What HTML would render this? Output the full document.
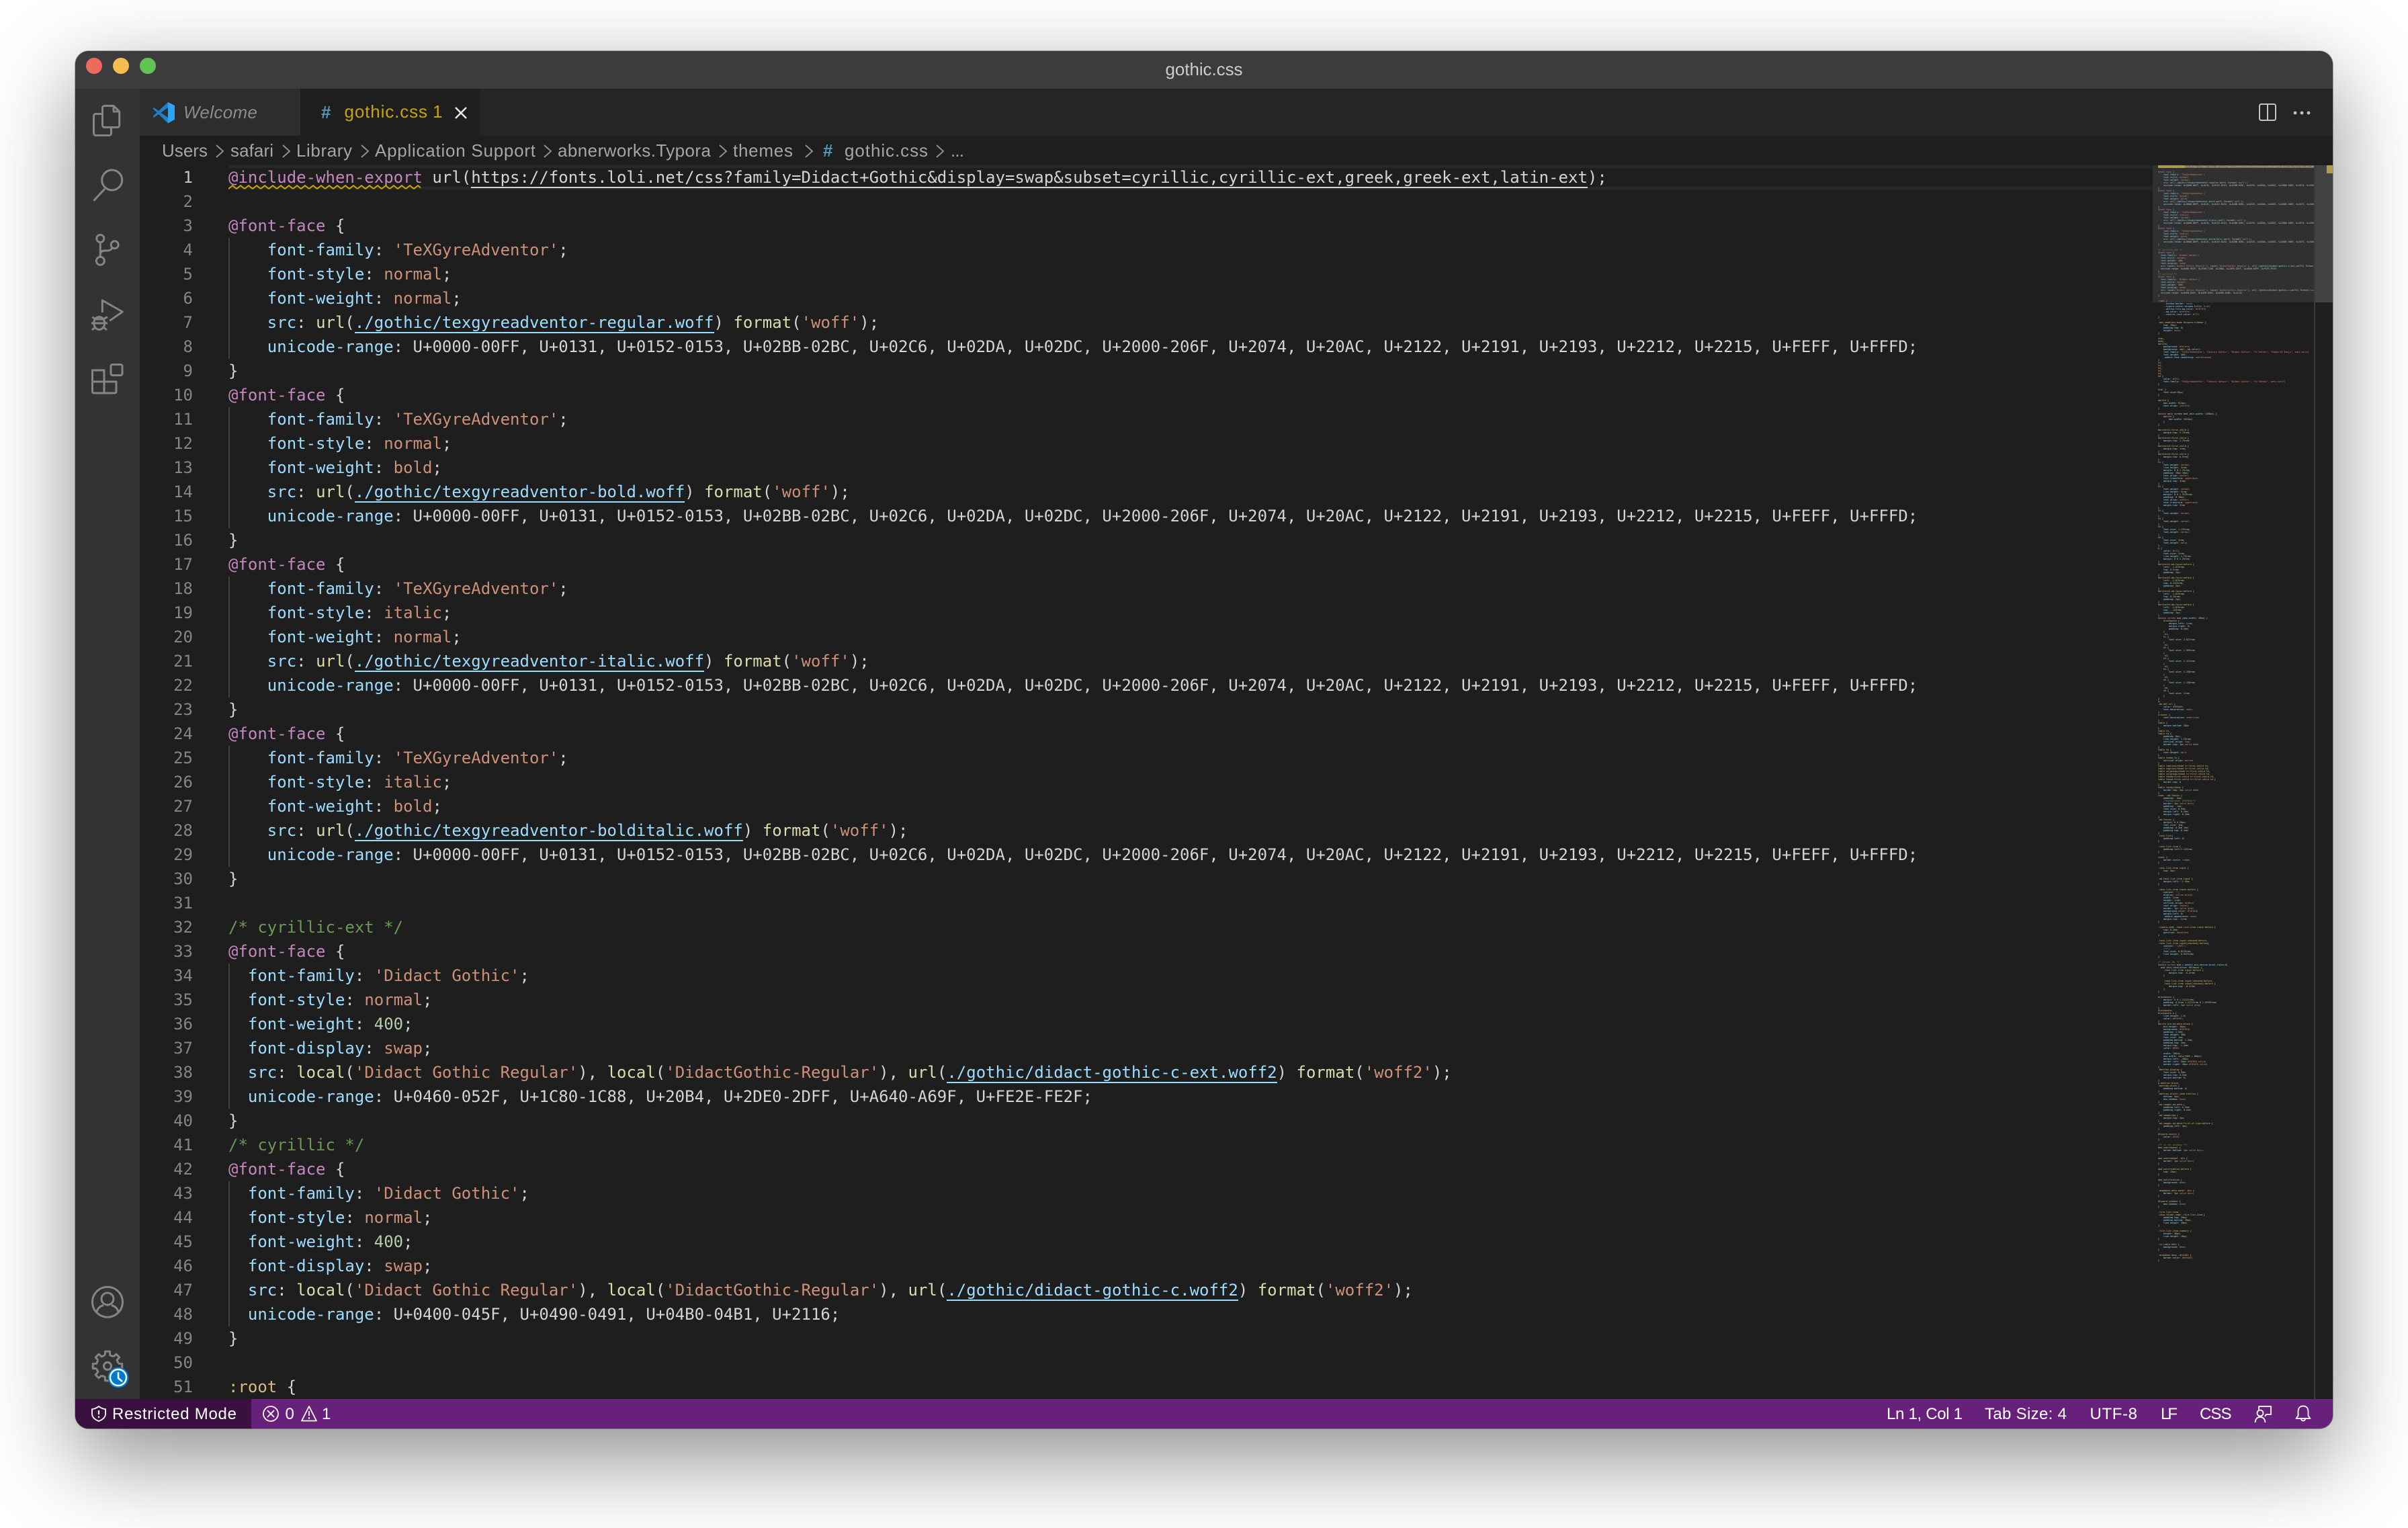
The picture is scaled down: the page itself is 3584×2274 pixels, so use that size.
<!DOCTYPE html>
<html lang="en"><head><meta charset="utf-8"><title>gothic.css</title>
<style>
html,body{margin:0;padding:0;background:#fff}
body{position:relative;width:3584px;height:2274px;overflow:hidden}
#win{position:absolute;left:112px;top:76px;width:3360px;height:2050px;border-radius:20px;box-shadow:0 0 0 1px rgba(0,0,0,.28),0 44px 130px 6px rgba(0,0,0,.42)}
#clip{position:absolute;left:0;top:0;width:3360px;height:2050px;border-radius:20px;overflow:hidden;background:#1e1e1e}
#in{position:absolute;left:-112px;top:-76px;width:3584px;height:2274px}
.r{position:absolute}
pre{margin:0;font-family:"DejaVu Sans Mono","Liberation Mono",monospace;color:#d4d4d4;font-variant-ligatures:none;white-space:pre}
#code{left:340px;top:246px;width:2864px;height:1836px;overflow:hidden;font-size:24px;line-height:36px}
#nums{left:208px;top:246px;width:79px;height:1836px;overflow:hidden;font-size:24px;line-height:36px;text-align:right;color:#858585}
#nums span{color:#c6c6c6}
#mini{left:3212px;top:246px;width:232px;height:1836px;overflow:hidden;font-size:3.322px;line-height:4px}
u{color:#9cdcfe;text-decoration:none}
s{color:#ce9178;text-decoration:none}
i{color:#d7ba7d;font-style:normal}
b{color:#b5cea8;font-weight:normal}
em{color:#c586c0;font-style:normal}
q{color:#dcdcaa;quotes:none}
q:before,q:after{content:none}
small{color:#6a9955;font-size:inherit}
a{border-bottom:2px solid currentColor}
a.l{color:#9cdcfe}
#mini a{border:0}
svg text{font-family:"Liberation Sans",Arial,sans-serif}
</style></head><body>
<div id="win"><div id="clip"><div id="in">
<div class="r" style="left:112px;top:76px;width:3360px;height:56px;background:#3c3c3c"></div>
<div class="r" style="left:112px;top:132px;width:96px;height:1950px;background:#333"></div>
<div class="r" style="left:208px;top:132px;width:3264px;height:70px;background:#252526"></div>
<div class="r" style="left:208px;top:132px;width:239px;height:70px;background:#2d2d2d"></div>
<div class="r" style="left:447px;top:132px;width:267px;height:70px;background:#1e1e1e"></div>
<div class="r" style="left:340px;top:246px;width:2864px;height:36px;box-sizing:border-box;border-top:4px solid #282828;border-bottom:4px solid #282828"></div>
<div class="r" style="left:340px;top:354px;width:2px;height:180px;background:#404040"></div>
<div class="r" style="left:340px;top:606px;width:2px;height:180px;background:#404040"></div>
<div class="r" style="left:340px;top:858px;width:2px;height:180px;background:#404040"></div>
<div class="r" style="left:340px;top:1110px;width:2px;height:180px;background:#404040"></div>
<div class="r" style="left:340px;top:1434px;width:2px;height:216px;background:#404040"></div>
<div class="r" style="left:340px;top:1758px;width:2px;height:216px;background:#404040"></div>
<pre id="nums" class="r"><span>1</span>
2
3
4
5
6
7
8
9
10
11
12
13
14
15
16
17
18
19
20
21
22
23
24
25
26
27
28
29
30
31
32
33
34
35
36
37
38
39
40
41
42
43
44
45
46
47
48
49
50
51</pre>
<pre id="code" class="r"><em>@include-when-export</em> url(<a>https://fonts.loli.net/css?family=Didact+Gothic&amp;display=swap&amp;subset=cyrillic,cyrillic-ext,greek,greek-ext,latin-ext</a>);

<em>@font-face</em> {
    <u>font-family</u>: <s>'TeXGyreAdventor'</s>;
    <u>font-style</u>: <s>normal</s>;
    <u>font-weight</u>: <s>normal</s>;
    <u>src</u>: <q>url</q>(<a class="l">./gothic/texgyreadventor-regular.woff</a>) <q>format</q>(<s>'woff'</s>);
    <u>unicode-range</u>: U+0000-00FF, U+0131, U+0152-0153, U+02BB-02BC, U+02C6, U+02DA, U+02DC, U+2000-206F, U+2074, U+20AC, U+2122, U+2191, U+2193, U+2212, U+2215, U+FEFF, U+FFFD;
}
<em>@font-face</em> {
    <u>font-family</u>: <s>'TeXGyreAdventor'</s>;
    <u>font-style</u>: <s>normal</s>;
    <u>font-weight</u>: <s>bold</s>;
    <u>src</u>: <q>url</q>(<a class="l">./gothic/texgyreadventor-bold.woff</a>) <q>format</q>(<s>'woff'</s>);
    <u>unicode-range</u>: U+0000-00FF, U+0131, U+0152-0153, U+02BB-02BC, U+02C6, U+02DA, U+02DC, U+2000-206F, U+2074, U+20AC, U+2122, U+2191, U+2193, U+2212, U+2215, U+FEFF, U+FFFD;
}
<em>@font-face</em> {
    <u>font-family</u>: <s>'TeXGyreAdventor'</s>;
    <u>font-style</u>: <s>italic</s>;
    <u>font-weight</u>: <s>normal</s>;
    <u>src</u>: <q>url</q>(<a class="l">./gothic/texgyreadventor-italic.woff</a>) <q>format</q>(<s>'woff'</s>);
    <u>unicode-range</u>: U+0000-00FF, U+0131, U+0152-0153, U+02BB-02BC, U+02C6, U+02DA, U+02DC, U+2000-206F, U+2074, U+20AC, U+2122, U+2191, U+2193, U+2212, U+2215, U+FEFF, U+FFFD;
}
<em>@font-face</em> {
    <u>font-family</u>: <s>'TeXGyreAdventor'</s>;
    <u>font-style</u>: <s>italic</s>;
    <u>font-weight</u>: <s>bold</s>;
    <u>src</u>: <q>url</q>(<a class="l">./gothic/texgyreadventor-bolditalic.woff</a>) <q>format</q>(<s>'woff'</s>);
    <u>unicode-range</u>: U+0000-00FF, U+0131, U+0152-0153, U+02BB-02BC, U+02C6, U+02DA, U+02DC, U+2000-206F, U+2074, U+20AC, U+2122, U+2191, U+2193, U+2212, U+2215, U+FEFF, U+FFFD;
}

<small>/* cyrillic-ext */</small>
<em>@font-face</em> {
  <u>font-family</u>: <s>'Didact Gothic'</s>;
  <u>font-style</u>: <s>normal</s>;
  <u>font-weight</u>: <b>400</b>;
  <u>font-display</u>: <s>swap</s>;
  <u>src</u>: <q>local</q>(<s>'Didact Gothic Regular'</s>), <q>local</q>(<s>'DidactGothic-Regular'</s>), <q>url</q>(<a class="l">./gothic/didact-gothic-c-ext.woff2</a>) <q>format</q>(<s>'woff2'</s>);
  <u>unicode-range</u>: U+0460-052F, U+1C80-1C88, U+20B4, U+2DE0-2DFF, U+A640-A69F, U+FE2E-FE2F;
}
<small>/* cyrillic */</small>
<em>@font-face</em> {
  <u>font-family</u>: <s>'Didact Gothic'</s>;
  <u>font-style</u>: <s>normal</s>;
  <u>font-weight</u>: <b>400</b>;
  <u>font-display</u>: <s>swap</s>;
  <u>src</u>: <q>local</q>(<s>'Didact Gothic Regular'</s>), <q>local</q>(<s>'DidactGothic-Regular'</s>), <q>url</q>(<a class="l">./gothic/didact-gothic-c.woff2</a>) <q>format</q>(<s>'woff2'</s>);
  <u>unicode-range</u>: U+0400-045F, U+0490-0491, U+04B0-04B1, U+2116;
}

<i>:root</i> {</pre>
<div class="r" style="left:3212px;top:246px;width:232px;height:4px;background:#6f6540"></div>
<div class="r" style="left:3212px;top:246px;width:40px;height:4px;background:#b8a14a"></div>
<pre id="mini" class="r"><em></em>                    url(<a>https://fonts.loli.net/css?family=Didact+Gothic&amp;display=swap&amp;subset=cyrillic,cyrillic-ext,greek,greek-ext,latin-ext</a>);

<em>@font-face</em> {
    <u>font-family</u>: <s>'TeXGyreAdventor'</s>;
    <u>font-style</u>: <s>normal</s>;
    <u>font-weight</u>: <s>normal</s>;
    <u>src</u>: <q>url</q>(<a class="l"><u>./gothic/texgyreadventor-regular.woff</u></a>) <q>format</q>(<s>'woff'</s>);
    <u>unicode-range</u>: U+0000-00FF, U+0131, U+0152-0153, U+02BB-02BC, U+02C6, U+02DA, U+02DC, U+2000-206F, U+2074, U+20AC, U+2122, U+2191, U+2193, U+2212, U+2215, U+FEFF, U+FFFD;
}
<em>@font-face</em> {
    <u>font-family</u>: <s>'TeXGyreAdventor'</s>;
    <u>font-style</u>: <s>normal</s>;
    <u>font-weight</u>: <s>bold</s>;
    <u>src</u>: <q>url</q>(<u>./gothic/texgyreadventor-bold.woff</u>) <q>format</q>(<s>'woff'</s>);
    <u>unicode-range</u>: U+0000-00FF, U+0131, U+0152-0153, U+02BB-02BC, U+02C6, U+02DA, U+02DC, U+2000-206F, U+2074, U+20AC, U+2122, U+2191, U+2193, U+2212, U+2215, U+FEFF, U+FFFD;
}
<em>@font-face</em> {
    <u>font-family</u>: <s>'TeXGyreAdventor'</s>;
    <u>font-style</u>: <s>italic</s>;
    <u>font-weight</u>: <s>normal</s>;
    <u>src</u>: <q>url</q>(<u>./gothic/texgyreadventor-italic.woff</u>) <q>format</q>(<s>'woff'</s>);
    <u>unicode-range</u>: U+0000-00FF, U+0131, U+0152-0153, U+02BB-02BC, U+02C6, U+02DA, U+02DC, U+2000-206F, U+2074, U+20AC, U+2122, U+2191, U+2193, U+2212, U+2215, U+FEFF, U+FFFD;
}
<em>@font-face</em> {
    <u>font-family</u>: <s>'TeXGyreAdventor'</s>;
    <u>font-style</u>: <s>italic</s>;
    <u>font-weight</u>: <s>bold</s>;
    <u>src</u>: <q>url</q>(<u>./gothic/texgyreadventor-bolditalic.woff</u>) <q>format</q>(<s>'woff'</s>);
    <u>unicode-range</u>: U+0000-00FF, U+0131, U+0152-0153, U+02BB-02BC, U+02C6, U+02DA, U+02DC, U+2000-206F, U+2074, U+20AC, U+2122, U+2191, U+2193, U+2212, U+2215, U+FEFF, U+FFFD;
}

<small>/* cyrillic-ext */</small>
<em>@font-face</em> {
  <u>font-family</u>: <s>'Didact Gothic'</s>;
  <u>font-style</u>: <s>normal</s>;
  <u>font-weight</u>: <b>400</b>;
  <u>font-display</u>: <s>swap</s>;
  <u>src</u>: <q>local</q>(<s>'Didact Gothic Regular'</s>), <q>local</q>(<s>'DidactGothic-Regular'</s>), <q>url</q>(<u>./gothic/didact-gothic-c-ext.woff2</u>) <q>format</q>(<s>'woff2'</s>);
  <u>unicode-range</u>: U+0460-052F, U+1C80-1C88, U+20B4, U+2DE0-2DFF, U+A640-A69F, U+FE2E-FE2F;
}
<small>/* cyrillic */</small>
<em>@font-face</em> {
  <u>font-family</u>: <s>'Didact Gothic'</s>;
  <u>font-style</u>: <s>normal</s>;
  <u>font-weight</u>: <b>400</b>;
  <u>font-display</u>: <s>swap</s>;
  <u>src</u>: <q>local</q>(<s>'Didact Gothic Regular'</s>), <q>local</q>(<s>'DidactGothic-Regular'</s>), <q>url</q>(<u>./gothic/didact-gothic-c.woff2</u>) <q>format</q>(<s>'woff2'</s>);
  <u>unicode-range</u>: U+0400-045F, U+0490-0491, U+04B0-04B1, U+2116;
}

<i>:root</i> {
    <u>--window-border</u>: <s>none</s>;
    <u>--typora-center-window-title</u>: <s>true</s>;
    <u>--active-file-bg-color</u>: <s>#f5f5f5</s>;
    <u>--bg-color</u>: <s>#fefefe</s>;
    <u>--control-text-color</u>: <s>#777</s>;
}

<i>.mac-seamless-mode #typora-sidebar</i> {
    <u>top</u>: <b>20px</b>;
    <u>padding-top</u>: <b>0</b>;
    <u>height</u>: <s>auto</s>;
}

<i>html</i>,
<i>body</i>,
<i>#write</i>{
    <u>background</u>: <s>#fefefe</s>;
    <u>background</u>: <q>var</q>(<u>--bg-color</u>);
    <u>font-family</u>: <s>"TeXGyreAdventor", "Century Gothic", "Didact Gothic", "Yu Gothic", "Segoe UI Emoji", sans-serif</s>;
    <u>font-weight</u>: <b>300</b>;
    <u>-webkit-font-smoothing</u>: <s>antialiased</s>;
}
<i>h1</i>,
<i>h2</i>,
<i>h3</i>,
<i>h4</i>,
<i>h5</i>,
<i>h6</i> {
    <u>color</u>: <s>#222</s>;
    <u>font-family</u>: <s>"TeXGyreAdventor", "Century Gothic", "Didact Gothic", "Yu Gothic", sans-serif</s>;
}

<i>html</i> {
    <u>font-size</u>:<b>19px</b>;
}

<i>#write</i> {
    <u>max-width</u>: <b>914px</b>;
    <u>text-align</u>: <s>justify</s>;
}

<em>@media</em> only screen and (<u>min-width</u>: <b>1400px</b>) {
    <i>#write</i> {
        <u>max-width</u>: <b>1024px</b>;
    }
}

<i>#write&gt;h1:first-child</i> {
    <u>margin-top</u>: <b>2.75rem</b>;
}
<i>#write&gt;h2:first-child</i> {
    <u>margin-top</u>: <b>1.75rem</b>;
}
<i>#write&gt;h3:first-child</i> {
    <u>margin-top</u>: <b>1rem</b>;
}
<i>#write&gt;h4:first-child</i> {
    <u>margin-top</u>: <b>0.5rem</b>;
}
<i>h1</i> {
    <u>font-weight</u>: <s>normal</s>;
    <u>line-height</u>: <b>4rem</b>;
    <u>margin</u>: <b>0 0 1.75rem</b>;
    <u>padding</u>: <b>20px 30px</b>;
    <u>text-align</u>: <s>center</s>;
    <u>text-transform</u>: <s>uppercase</s>;
    <u>margin-top</u>: <b>4rem</b>;
}
<i>h2</i> {
    <u>font-weight</u>: <s>normal</s>;
    <u>line-height</u>: <b>3rem</b>;
    <u>margin</u>: <b>0 0 1.3125rem</b>;
    <u>padding</u>: <b>0 30px</b>;
    <u>text-align</u>: <s>center</s>;
    <u>text-transform</u>: <s>uppercase</s>;
    <u>margin-top</u>: <b>3rem</b>
}
<i>h3</i> {
    <u>font-weight</u>: <s>normal</s>;
}
<i>h4</i> {
    <u>font-weight</u>: <s>normal</s>;
}
<i>h5</i> {
    <u>font-size</u>: <b>1.125rem</b>;
    <u>font-weight</u>: <s>normal</s>;
}
<i>h6</i> {
    <u>font-size</u>: <b>1rem</b>;
    <u>font-weight</u>: <s>bold</s>;
}
<i>p</i> {
    <u>color</u>: <s>#111</s>;
    <u>font-size</u>: <b>1rem</b>;
    <u>line-height</u>: <b>1.75rem</b>;
    <u>margin</u>: <b>0 0 1.25rem</b>;
}
<i>#write&gt;h1.md-focus:before</i> {
    <u>left</u>: <b>-1.875rem</b>;
    <u>top</u>: <b>0.5rem</b>;
    <u>padding</u>: <b>2px</b>;
}
<i>#write&gt;h2.md-focus:before</i> {
    <u>left</u>: <b>-1.875rem</b>;
    <u>top</u>: <b>0.3125rem</b>;
    <u>padding</u>: <b>2px</b>;
}
<i>#write&gt;h3.md-focus:before</i> {
    <u>left</u>: <b>-1.875rem</b>;
    <u>top</u>: <b>0.25rem</b>;
    <u>padding</u>: <b>2px</b>;
}
<i>#write&gt;h4.md-focus:before</i> {
    <u>left</u>: <b>-1.875rem</b>;
    <u>top</u>: <b>-.125rem</b>;
    <u>padding</u>: <b>2px</b>;
}
<em>@media</em> <s>screen</s> and (<u>max-width</u>: <b>48em</b>) {
    <i>blockquote</i> {
        <u>margin-left</u>: <b>1rem</b>;
        <u>margin-right</u>: <b>0</b>;
        <u>padding</u>: <b>0.5em</b>;
    }
    <i>.h1</i>,
    <i>h1</i> {
        <u>font-size</u>: <b>2.827rem</b>;
    }
    <i>.h2</i>,
    <i>h2</i> {
        <u>font-size</u>: <b>1.999rem</b>;
    }
    <i>.h3</i>,
    <i>h3</i> {
        <u>font-size</u>: <b>1.413rem</b>;
    }
    <i>.h4</i>,
    <i>h4</i> {
        <u>font-size</u>: <b>1.250rem</b>;
    }
    <i>.h5</i>,
    <i>h5</i> {
        <u>font-size</u>: <b>1.150rem</b>;
    }
    <i>.h6</i>,
    <i>h6</i> {
        <u>font-size</u>: <b>1rem</b>;
    }
}
<i>a</i>,
<i>.md-def-url</i> {
    <u>color</u>: <s>#990000</s>;
    <u>text-decoration</u>: <s>none</s>;
}
<i>a:hover</i> {
    <u>text-decoration</u>: <s>underline</s>;
}
<i>table</i> {
    <u>margin-bottom</u>: <b>20px</b>
}
<i>table th</i>,
<i>table td</i> {
    <u>padding</u>: <b>8px</b>;
    <u>line-height</u>: <b>1.25rem</b>;
    <u>vertical-align</u>: <s>top</s>;
    <u>border-top</u>: <b>1px</b> <s>solid #ddd</s>
}
<i>table th</i> {
    <u>font-weight</u>: <s>bold</s>
}
<i>table thead th</i> {
    <u>vertical-align</u>: <s>bottom</s>
}
<i>table caption+thead tr:first-child th</i>,
<i>table caption+thead tr:first-child td</i>,
<i>table colgroup+thead tr:first-child th</i>,
<i>table colgroup+thead tr:first-child td</i>,
<i>table thead:first-child tr:first-child th</i>,
<i>table thead:first-child tr:first-child td</i> {
    <u>border-top</u>: <b>0</b>
}
<i>table tbody+tbody</i> {
    <u>border-top</u>: <b>2px</b> <s>solid #ddd</s>
}
<i>code</i>, <i>.md-fences</i> {
    <u>padding</u>: <b>.5em</b>;
    <small>/*background: #f0f0f0;*/</small>
    <u>border</u>: <b>1px</b> <s>solid #ccc</s>;
    <u>padding</u>: <b>.1em</b>;
    <u>font-size</u>: <b>0.9em</b>;
    <u>margin-left</u>: <b>0.2em</b>;
    <u>margin-right</u>: <b>0.2em</b>;
}
<i>.md-fences</i> {
    <u>margin</u>: <b>0 0 20px</b>;
    <u>font-size</u>: <b>1em</b>;
    <u>padding</u>: <b>0.3em 1em</b>;
    <u>padding-top</u>: <b>0.4em</b>;
}
<i>.task-list</i>{
    <u>padding-left</u>: <b>0</b>;
}

<i>.task-list-item</i> {
    <u>padding-left</u>:<b>2.125rem</b>;
}

<i>input</i> {
    <u>border-style</u>: <s>ridge</s>;
}

<i>.task-list-item input</i> {
    <u>top</u>: <b>3px</b>;
}

<i>.md-task-list-item input</i> {
    <u>margin-left</u>: <b>-1.5em</b>;
}

<i>.task-list-item input:before</i> {
    <u>content</u>: <s>""</s>;
    <u>display</u>: <s>inline-block</s>;
    <u>width</u>: <b>1rem</b>;
    <u>height</u>: <b>1rem</b>;
    <u>vertical-align</u>: <s>middle</s>;
    <u>text-align</u>: <s>center</s>;
    <u>border</u>: <b>1px</b> <s>solid gray</s>;
    <u>background-color</u>: <s>#fdfdfd</s>;
    <u>margin-left</u>: <b>0</b>;
    <u>-webkit-appearance</u>: <s>none</s>;
    <u>margin-top</u>: <b>-1rem</b>;
}

<i>.typora-node .task-list-item input:before</i> {
    <u>top</u>: <b>0.3em</b>;
    <u>position</u>: <s>absolute</s>;
}

<i>.task-list-item input:checked:before</i>,
<i>.task-list-item input[checked]:before</i>{
    <u>content</u>: <s>'\25FC'</s>;
    <small>/*√*/</small>
    <u>font-size</u>: <b>0.8125rem</b>;
    <u>line-height</u>: <b>0.9375rem</b>;
}

<small>/* Chrome 29+ */</small>
<em>@media</em> <s>screen</s> and (<u>-webkit-min-device-pixel-ratio</u>:<b>0</b>)
  and (<u>min-resolution</u>:<b>.001dpcm</b>) {
    <i>.task-list-item input:before</i> {
        <u>margin-top</u>: <b>-0.2rem</b>;
    }

    <i>.task-list-item input:checked:before</i>,
    <i>.task-list-item input[checked]:before</i> {
        <u>margin-top</u>: <b>-0.2rem</b>;
    }
}

<i>blockquote</i> {
    <u>margin</u>: <b>0 0 1.11111rem</b>;
    <u>padding</u>: <b>0.5rem 1.11111rem 0 1.05555rem</b>;
    <u>border-left</u>: <b>1px</b> <s>solid gray</s>;
}
<i>blockquote</i>,
<i>blockquote p</i> {
    <u>line-height</u>: <b>1.6</b>;
    <u>color</u>: <s>#6f6f6f</s>;
}
<i>#write pre.md-meta-block</i> {
    <u>min-height</u>: <b>30px</b>;
    <u>background</u>: <s>#f8f8f8</s>;
    <u>padding</u>: <b>1.5em</b>;
    <u>font-weight</u>: <b>300</b>;
    <u>font-size</u>: <b>1em</b>;
    <u>padding-bottom</u>: <b>1.5em</b>;
    <u>padding-top</u>: <b>3em</b>;
    <u>margin-top</u>: <b>-1.5em</b>;
    <u>color</u>: <s>#999</s>;

    <u>width</u>: <b>100vw</b>;
    <u>max-width</u>: <q>calc</q>(<b>100% + 60px</b>);
    <u>margin-left</u>: <b>-30px</b>;
    <u>border-left</u>: <b>30px</b> <s>#f8f8f8 solid</s>;
    <u>border-right</u>: <b>30px</b> <s>#f8f8f8 solid</s>;
}
<i>.MathJax_Display</i> {
    <u>font-size</u>: <b>0.9em</b>;
    <u>margin-top</u>: <b>0.5em</b>;
    <u>margin-bottom</u>: <b>0</b>;
}
<i>p.mathjax-block</i>,
<i>.mathjax-block</i> {
    <u>padding-bottom</u>: <b>0</b>;
}
<i>.mathjax-block&gt;.code-tooltip</i> {
    <u>bottom</u>: <b>5px</b>;
    <u>box-shadow</u>: <s>none</s>;
}
<i>.md-image&gt;.md-meta</i> {
    <u>padding-left</u>: <b>0.5em</b>;
    <u>padding-right</u>: <b>0.5em</b>;
}
<i>.md-image&gt;img</i> {
    <u>margin-top</u>: <b>2px</b>;
}
<i>.md-image&gt;.md-meta:first-of-type:before</i> {
    <u>padding-left</u>: <b>4px</b>;
}

<i>#typora-source</i> {
    <u>color</u>: <s>#555</s>;
}

<small>/** ui for windows **/</small>
<i>#md-searchpanel</i> {
    <u>border-bottom</u>: <b>1px</b> <s>solid #ccc</s>;
}

<i>#md-searchpanel .btn</i> {
    <u>border</u>: <b>1px</b> <s>solid #ccc</s>;
}

<i>#md-notification:before</i> {
    <u>top</u>: <b>14px</b>;
}

<i>#md-notification</i> {
    <u>background</u>: <s>#eee</s>;
}

<i>.megamenu-menu-panel .btn</i> {
    <u>border</u>: <b>1px</b> <s>solid #ccc</s>;
}

<i>#typora-sidebar</i> {
    <u>box-shadow</u>: <s>none</s>;
}

<i>.file-list-item</i>,
<i>.show-folder-name .file-list-item</i> {
    <u>padding-top</u>: <b>20px</b>;
    <u>padding-bottom</u>: <b>20px</b>;
    <u>line-height</u>: <b>20px</b>;
}

<i>.file-list-item-summary</i> {
    <u>height</u>: <b>40px</b>;
    <u>line-height</u>: <b>20px</b>;
}

<i>.ty-table-edit</i> {
    <u>background</u>: <s>#eee</s>;
}

<i>.dropdown-menu .divider</i> {
    <u>border-color</u>: <s>#e5e5e5</s>;
}</pre>
<div class="r" style="left:3204px;top:246px;width:240px;height:204px;background:rgba(121,121,121,.2)"></div>
<div class="r" style="left:3444px;top:246px;width:28px;height:204px;background:rgba(121,121,121,.4)"></div>
<div class="r" style="left:3444px;top:246px;width:2px;height:1836px;background:#3c3c3c"></div>
<div class="r" style="left:3463px;top:246px;width:9px;height:12px;background:#b39d4b"></div>
<div class="r" style="left:112px;top:2082px;width:3360px;height:44px;background:#68217a"></div>
<div class="r" style="left:112px;top:2082px;width:262px;height:44px;background:#3a1041"></div>

<svg class="r" style="left:0;top:0" width="3584" height="2274" viewBox="0 0 3584 2274" fill="none">
<defs>
<pattern id="sq" x="340" y="275" width="12" height="7" patternUnits="userSpaceOnUse"><path d="M0 6 L6 1.2 L12 6" stroke="#cca700" stroke-width="2" fill="none"/></pattern>
<path id="t" d="M16.08 -3.71 L21.73 -3.44 L21.73 3.44 L16.08 3.71 A16.5 16.5 0 0 1 14 8.74"/>
</defs>
<rect x="340" y="275" width="286" height="7" fill="url(#sq)"/>

<!-- traffic lights -->
<circle cx="140" cy="98" r="12" fill="#ee6a5f"/>
<circle cx="180" cy="98" r="12" fill="#f5bd4f"/>
<circle cx="220" cy="98" r="12" fill="#61c454"/>
<text x="1734.5" y="112" font-size="26" fill="#cccccc" textLength="115">gothic.css</text>

<!-- vscode logo -->
<path d="M250 152 L260 157 V178 L250 183.5 Z" fill="#2ea2f5"/>
<path d="M250 152 L236 165 L229 160 L227.5 162 L233.5 167.5 L227.5 173 L229 175 L236 170 L250 183.5 L250 175 L239.5 167.5 L250 160Z" fill="#1f7fc9"/>
<text x="273" y="176" font-size="26" font-style="italic" fill="#8c8c8c" textLength="110">Welcome</text>

<text x="478" y="176" font-size="26" font-weight="bold" fill="#519aba" textLength="19">#</text>
<text x="512.5" y="175" font-size="26" fill="#c9a500" textLength="123.5">gothic.css</text>
<text x="644" y="175" font-size="26" fill="#c9a500">1</text>
<path d="M678 160 L694 176 M694 160 L678 176" stroke="#e6e6e6" stroke-width="2.6"/>

<!-- top right -->
<rect x="3363" y="155" width="24" height="24" rx="2.5" stroke="#c5c5c5" stroke-width="2"/>
<path d="M3375 155 V179" stroke="#c5c5c5" stroke-width="2"/>
<circle cx="3416" cy="168" r="2.4" fill="#c5c5c5"/>
<circle cx="3426" cy="168" r="2.4" fill="#c5c5c5"/>
<circle cx="3436" cy="168" r="2.4" fill="#c5c5c5"/>

<!-- breadcrumbs -->
<g font-size="26" fill="#a6a6a6">
<text x="241" y="233" textLength="68">Users</text>
<text x="343" y="233" textLength="64">safari</text>
<text x="441" y="233" textLength="83">Library</text>
<text x="558" y="233" textLength="239">Application Support</text>
<text x="830" y="233" textLength="228">abnerworks.Typora</text>
<text x="1091" y="233" textLength="89">themes</text>
<text x="1225" y="233" font-weight="bold" fill="#519aba" textLength="15">#</text>
<text x="1257" y="233" textLength="124">gothic.css</text>
<text x="1415" y="233" textLength="20">...</text>
</g>
<g stroke="#8f8f8f" stroke-width="2">
<path d="M322 216 L332 225 L322 234"/>
<path d="M421 216 L431 225 L421 234"/>
<path d="M538 216 L548 225 L538 234"/>
<path d="M810 216 L820 225 L810 234"/>
<path d="M1071 216 L1081 225 L1071 234"/>
<path d="M1199 216 L1209 225 L1199 234"/>
<path d="M1394 216 L1404 225 L1394 234"/>
</g>

<!-- activity bar -->
<g stroke="#858585" stroke-width="3" stroke-linejoin="round">
<path d="M155.5 157.5 H169 L177.7 166 V186.5 A3 3 0 0 1 174.7 189.5 H155.5 A3 3 0 0 1 152.5 186.5 V160.5 A3 3 0 0 1 155.5 157.5Z"/>
<path d="M169 157.5 V166 H177.7"/>
<path d="M152 169.5 H142.5 A3 3 0 0 0 139.5 172.5 V198.5 A3 3 0 0 0 142.5 201.5 H162.5 A3 3 0 0 0 165.5 198.5 V190"/>
<circle cx="166.7" cy="268" r="15"/>
<path d="M156 281 L139.5 298.7"/>
<circle cx="149.3" cy="355" r="5.5"/>
<circle cx="170.7" cy="364.3" r="5.5"/>
<circle cx="149.3" cy="388.3" r="6"/>
<path d="M149.3 361 V382 M149.3 378 Q150 373 156 373 H160 Q165 373 167 369"/>
<path d="M152.3 465 V447 L182.3 464 L163.3 477.3"/>
<ellipse cx="147.7" cy="481" rx="8" ry="9.5"/>
<path d="M137.3 471.7 L142 475 M160 471.7 L153.5 475 M136 481 H160 M137 491 L142 487 M159 491 L154 487 M141 475 H155"/>
<path d="M137.5 551 H155 V585 H139.5 A2 2 0 0 1 137.5 583 V551 Z M137.5 568 H173 V583 A2 2 0 0 1 171 585 H155"/>
<path d="M155 568 H173"/>
<rect x="165" y="542.5" width="17" height="16" rx="2.5"/>
<circle cx="160" cy="1937.7" r="22.5"/>
<circle cx="160" cy="1933" r="9"/>
<path d="M143.5 1954 C145 1946 150 1943.5 154 1942.5 M176.5 1954 C175 1946 170 1943.5 166 1942.5"/>
<g transform="translate(160 2033)">
<use href="#t"/><use href="#t" transform="rotate(45)"/><use href="#t" transform="rotate(90)"/><use href="#t" transform="rotate(135)"/><use href="#t" transform="rotate(180)"/><use href="#t" transform="rotate(225)"/><use href="#t" transform="rotate(270)"/><use href="#t" transform="rotate(315)"/>
<circle r="5.5"/>
</g>
</g>
<circle cx="176" cy="2050" r="15.5" fill="#007acc"/>
<circle cx="176" cy="2050" r="12" fill="#007acc" stroke="#fff" stroke-width="2.4"/>
<path d="M176 2042 V2051 L182 2056" stroke="#fff" stroke-width="2.6"/>

<!-- status bar -->
<g stroke="#fff" stroke-width="1.8" stroke-linejoin="round">
<path d="M147 2093 C151 2096 154 2097 157 2097 V2104 C157 2110 152 2113 147 2115 C142 2113 137 2110 137 2104 V2097 C140 2097 143 2096 147 2093Z"/>
<path d="M147 2099 V2105 M147 2107.5 V2110" stroke-width="2.2"/>
<circle cx="403" cy="2104" r="11"/>
<path d="M398 2099 L408 2109 M408 2099 L398 2109"/>
<path d="M460 2093 L471 2114.5 H449 Z"/>
<path d="M460 2100 V2107 M460 2109 V2112"/>
<path d="M3362 2098 V2093 H3380 V2105 H3373 L3371 2108"/>
<circle cx="3364" cy="2103" r="4.5"/>
<path d="M3356.5 2117 C3357 2111 3360 2109 3364 2109 C3368 2109 3371 2111 3371.5 2117"/>
<path d="M3428 2092.5 C3423 2092.5 3420.5 2096 3420.5 2101 V2107 L3417.5 2111 H3438.5 L3435.5 2107 V2101 C3435.5 2096 3433 2092.5 3428 2092.5 Z M3425 2111.5 A3 3 0 0 0 3431 2111.5"/>
</g>
<g font-size="24" fill="#fff">
<text x="167" y="2112" textLength="185">Restricted Mode</text>
<text x="424.5" y="2112" textLength="13">0</text>
<text x="479" y="2112">1</text>
<text x="2808" y="2112" textLength="113">Ln 1, Col 1</text>
<text x="2954" y="2112" textLength="122">Tab Size: 4</text>
<text x="3110.5" y="2112" textLength="70.5">UTF-8</text>
<text x="3216" y="2112" textLength="25">LF</text>
<text x="3274" y="2112" textLength="47.5">CSS</text>
</g>
</svg>
</div></div></div>
</body></html>
